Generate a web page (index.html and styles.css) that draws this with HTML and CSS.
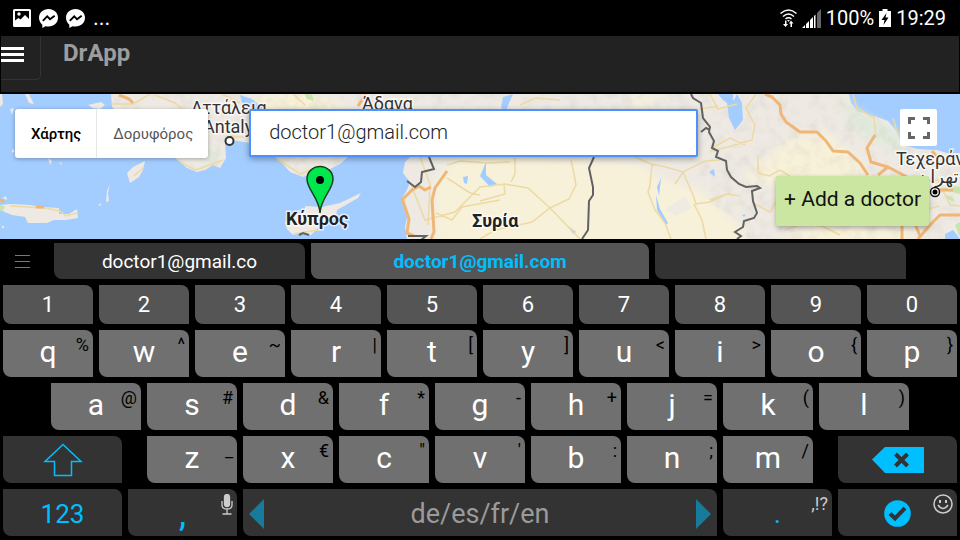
FILE: index.html
```html
<!DOCTYPE html>
<html lang="el">
<head>
<meta charset="utf-8">
<title>DrApp</title>
<link rel="stylesheet" href="styles.css">
</head>
<body>
<div class="statusbar">
  <div class="status-group notices">
    <svg width="18" height="18" viewBox="0 0 18 18"><path fill="#fff" fill-rule="evenodd" d="M1.500 0h15q1.500 0 1.500 1.500v15q0 1.500-1.500 1.500h-15Q0 18 0 16.500v-15Q0 0 1.500 0ZM2 2v9.500l3.500-2.500 2 1.500L12 6l4 4V2Z"/><circle cx="6" cy="5" r="1.700" fill="#fff"/></svg>
    <svg width="19" height="19" viewBox="0 0 20 20"><path fill="#fff" d="M10 0C4.300 0 0 4 0 9.300c0 3 1.300 5.300 3.500 7.200V20l3.300-1.900c1 .3 2.100.4 3.200.4 5.700 0 10-4 10-9.200S15.700 0 10 0Z"/><path fill="none" stroke="#000" stroke-width="2" d="M4 12.500 8.600 7.800l3 3L16.500 7"/></svg>
    <svg width="19" height="19" viewBox="0 0 20 20"><path fill="#fff" d="M10 0C4.300 0 0 4 0 9.300c0 3 1.300 5.300 3.500 7.200V20l3.300-1.900c1 .3 2.100.4 3.200.4 5.700 0 10-4 10-9.200S15.700 0 10 0Z"/><path fill="none" stroke="#000" stroke-width="2" d="M4 12.500 8.600 7.800l3 3L16.500 7"/></svg>
    <span class="more">...</span>
  </div>
  <div class="status-group">
    <svg width="17" height="19" viewBox="0 0 17 19" fill="none" stroke="#fff" stroke-width="1.500"><path d="M.5 4.500Q8.500-2.500 16.500 4.500M3 7.500q5.500-5 11 0M5.500 10q3-2.500 6 0"/><path fill="#fff" stroke="none" d="M7 11h3l-1.500 1.700ZM5 11.500h1.500V15H8l-2.500 3L3 15h2ZM11 11.500l2.500 3H12V18h-1.500v-3.500H9Z"/></svg>
    <svg width="19" height="19" viewBox="0 0 19 19" fill="#fff"><path d="M0 19l3-3v3ZM4 15l3-3v7H4ZM8 11l3-3v11H8ZM12 7l1.500-1.500V19H12Z"/><path fill="#666" d="M15 4l4-4v19h-4Z"/></svg>
    <span>100%</span>
    <svg width="12" height="18" viewBox="0 0 12 18"><path fill="#fff" d="M3.500 0h5v2H12v16H0V2h3.500Z"/><path d="M7.500 4 2.500 11h3L4.500 16l5-7.500h-3Z"/></svg>
    <span>19:29</span>
  </div>
</div>

<header class="appbar">
  <button class="menu" aria-label="Menu"><span></span><span></span><span></span></button>
  <h1>DrApp</h1>
</header>

<main class="map">
  <svg class="terrain" viewBox="0 94 960 145" preserveAspectRatio="xMidYMid slice">
    <defs>
      <filter id="soft"><feGaussianBlur stdDeviation="4"/></filter>
      <filter id="relief" x="0" y="0" width="100%" height="100%"><feTurbulence type="fractalNoise" baseFrequency=".09" numOctaves="3" seed="4"/><feColorMatrix values="0 0 0 0 .55  0 0 0 0 .52  0 0 0 0 .46  1.600 0 0 0 -.72"/></filter>
      <clipPath id="hills"><path d="M111 94H849L853 107 877 117 902 145 960 153V239H748L742 225 730 215 712 205 690 165 640 158 560 157 480 150 405 157 348 158 330 170 303 177 290 172 275 158 250 143H225L220 166 197 172 180 162 175 158 150 120 112 107Z"/></clipPath>
    </defs>
    <rect y="94" width="960" height="145" fill="#a3ccff"/>
    <g fill="#eeeae3">
      <path d="M111 94H849L851 103 857 111 877 117 888 121 897 132 902 145 918 149 937 150 950 154 960 153V239H407L405 227 408 213 402 198 407 190 410 182 403 173 405 162 411 156 348 157 340 164 330 169 318 172 303 177 290 172 282 163 275 157 262 146 250 143 237 141 225 143 226 158 220 168 213 165 205 170 197 172 187 168 180 162 175 158 165 145 150 135 128 120 112 107Z"/>
      <path d="M0 205 10 204 30 205 42 207 59 208 59 214 69 214 77 209 78 218 66 220 54 220 47 223 28 223 25 217 12 215 0 210Z"/>
      <path d="M145 161 143 170 139 177 130 183 127 173 133 167ZM110 184 108 193 109 201 106 202 107 191ZM48 158l4 3-2 4ZM59 162l3 1-1 2ZM98 205l4-2-2 3ZM2 198l4-2 1 4ZM25 94h4l5 10-5-1ZM88 105l13-3 4 3-5 4-7-1ZM0 94h2l1 10-3 3ZM10 109l4-1-2 7ZM12 149l3 2-3 2ZM2 226h2v2H2Z"/>
      <path d="M285 222 289 218 305 211V206L322 207 340 203 361 193 358 198 337 210 336 217 328 223 318 228 311 235 303 233 293 235 287 229Z"/>
    </g>
    <g fill="#f8f1d9" filter="url(#soft)">
      <path d="M436 182 455 160 500 154 560 160 640 164 655 178 700 190 722 212 742 228 745 250H436ZM740 180l50-40 35-8 45 42-25 20ZM770 245l50-20 90 5 5 20ZM255 94h60l50 25H260ZM630 94l35 5-30 6Z"/>
    </g>
    <path fill="#eeeae3" opacity=".8" d="M665 210l20-14 6 12-14 8ZM655 158h25l-2 10ZM706 183l28 22-17-4Z"/>
    <path fill="#dfeadb" filter="url(#soft)" d="M840 94l13 14 47 26 5 24-25-16-30-17ZM195 150l25-3-7 18Z"/>
    <g clip-path="url(#hills)"><rect y="94" width="960" height="145" filter="url(#relief)" opacity=".35"/></g>
    <g fill="#c8e6ac"><path d="M304 93l8 2 2 6-7-2ZM0 205l5 1-2 5-3-1ZM942 189l8-3 10 1v7l-8-2ZM945 195l7 2 3 5-8-3ZM955 225l5-3v15Z"/></g>
    <g fill="#a3ccff"><path d="M727 103l7-3 3-6 5 9 1 17-8 10-6-12ZM240 95l12 4 11 9-7 3-14-8ZM718 94h15v14l-10-8ZM480 176l6-14v13l11 9-7 3ZM503 97l10-3-7 16-5-2ZM463 177l5-1-1 8-3-1ZM709 172l5-3 1 8ZM657 187l4-9-2 18ZM656 195l4 14 8 14-2 2-9-15ZM945 234l8-4 7 9h-15ZM742 215l4-1-2 3ZM568 226l8 6-3 2Z"/></g>
    <g fill="none" stroke="#ecd9a4" stroke-width="1.500">
      <path d="M112 104 133 104 150 94M155 95 175 103 185 111M180 162 195 170 213 164 223 160M222 94 240 103M230 136 250 138M277 159 300 174 322 166M293 94 305 105M520 105 535 98 560 100M515 158v16l-4 8M420 157 430 184 428 225M447 165 460 161 487 163 510 162M410 182 425 220 455 212 480 187 505 184 528 188 550 208 580 239M480 201 505 194 504 184M436 213 452 220 462 207 500 200M571 160 574 174 576 185 569 199 550 208 532 222 495 230 480 239M447 178 470 193 480 195M635 157 651 164 666 167 683 172 705 161 720 160M652 164 650 185 648 192 655 210 665 223 671 239M683 172 693 195 696 204 710 202 727 194 740 196M683 172 675 184M694 204 702 220 706 239M710 94 718 109 737 104M712 148 730 138 745 145M700 109 718 106M756 94 746 108 755 125 752 140 728 147 710 151M758 155 758 173 769 176 780 170 790 176M710 200 730 193M753 203 770 212 776 202M853 94l4 14 17 10 2 20M893 118l5 17M785 230 803 224 822 226 840 235M918 182 938 180 950 205 960 206M923 210 940 206"/>
      <path d="M10 206 45 208 60 211 66 216 77 213M134 176 143 168M293 234 318 230 331 219"/>
    </g>
    <g fill="none" stroke="#f0b676" stroke-width="3" stroke-linejoin="round">
      <path d="M119 95 129 99 133 103M36 207h8M0 200l4 2"/>
      <path d="M366 94l-8 12M447 171 435 188 432 200 434 232 431 239M402 198 409 219 407 233 414 236M403 199 412 190 419 186 425 190 431 187"/>
      <path d="M765 94 772 97 780 105 781 114 786 122 800 132H817L826 141 833 151 848 152 860 163 868 175M875 135 867 148 871 162 888 167 878 175M888 167 907 177M960 215 940 215 931 224 918 239M902 226v13M916 226l4 10M932 151l5 6M939 190h14"/>
    </g>
    <g fill="none" stroke="#626262" stroke-width="2">
      <path d="M429 157 434 169 422 172 421 182 415 187 407 181M408 236h18l-5 4M299 235l4-2 6 2M594 157 589 168 593 187 593 195 589 201 588 230 582 239"/>
      <path d="M691 94 693 98 701 103 703 118 710 127 709 132 714 141 712 148 718 151 716 157 726 161 727 170 731 177 739 184 746 187 757 186 760 188 752 191 753 201 757 213 754 218 744 221 743 227 735 232 741 236 737 239M701 132 706 128 710 130"/>
    </g>
    <g class="place">
      <text x="191" y="114">Αττάλεια</text><text x="203" y="133">Antalya</text>
      <text x="362" y="110">Άδανα</text>
      <text x="896" y="165">Τεχεράν</text><text class="arabic" x="917" y="183">تهران</text>
      <text class="country" x="286" y="225">Κύπρος</text><text class="country" x="472" y="227">Συρία</text>
    </g>
    <circle cx="229.500" cy="141" r="4" fill="#fff" stroke="#333" stroke-width="2"/>
    <circle cx="935" cy="192" r="4.500" fill="#fff" stroke="#111" stroke-width="1.500"/><circle cx="935" cy="192" r="2.500"/>
    <path d="M320 213C319 197 307 190 307 179a13 12.500 0 0 1 26 0C333 190 321 197 320 213Z" fill="#00e64d" stroke="#173f20" stroke-width="1.500"/><circle cx="320" cy="180" r="4"/>
  </svg>
  <div class="controls">
    <div class="maptype"><button class="active">Χάρτης</button><button>Δορυφόρος</button></div>
    <input class="search" type="text" value="doctor1@gmail.com" aria-label="Search">
    <button class="fullscreen" aria-label="Fullscreen"><svg width="24" height="24" viewBox="0 0 24 24" fill="none" stroke="#666" stroke-width="3"><path d="M2.500 8V2.500H8M16 2.500h5.500V8M21.500 16v5.500H16M8 21.500H2.500V16"/></svg></button>
  </div>
  <button class="add">+ Add a doctor</button>
</main>

<section class="keyboard" aria-label="Keyboard">
  <div class="row suggestions">
    <button class="tools" aria-label="Options"><span></span><span></span><span></span></button>
    <button class="key dark">doctor1@gmail.co</button>
    <button class="key best">doctor1@gmail.com</button>
    <button class="key dark" aria-label="Empty suggestion"></button>
  </div>
  <div class="row numbers">
    <button class="key">1</button><button class="key">2</button><button class="key">3</button><button class="key">4</button><button class="key">5</button><button class="key">6</button><button class="key">7</button><button class="key">8</button><button class="key">9</button><button class="key">0</button>
  </div>
  <div class="row letters top">
    <button class="key">q<small>%</small></button><button class="key">w<small>^</small></button><button class="key">e<small>~</small></button><button class="key">r<small>|</small></button><button class="key">t<small>[</small></button><button class="key">y<small>]</small></button><button class="key">u<small>&lt;</small></button><button class="key">i<small>&gt;</small></button><button class="key">o<small>{</small></button><button class="key">p<small>}</small></button>
  </div>
  <div class="row letters home">
    <button class="key">a<small>@</small></button><button class="key">s<small>#</small></button><button class="key">d<small>&amp;</small></button><button class="key">f<small>*</small></button><button class="key">g<small>-</small></button><button class="key">h<small>+</small></button><button class="key">j<small>=</small></button><button class="key">k<small>(</small></button><button class="key">l<small>)</small></button>
  </div>
  <div class="row letters bottom">
    <button class="key dark shift" aria-label="Shift"><svg width="40" height="34" viewBox="0 0 40 34" fill="none" stroke="#00bfff" stroke-width="1.500"><path d="M20 1.500 2 18.500h9.500V32.500h17V18.500H38Z"/></svg></button>
    <button class="key first">z<small>_</small></button><button class="key">x<small>€</small></button><button class="key">c<small>"</small></button><button class="key">v<small>'</small></button><button class="key">b<small>:</small></button><button class="key">n<small>;</small></button><button class="key">m<small>/</small></button>
    <button class="key dark erase" aria-label="Backspace"><svg width="52" height="26" viewBox="0 0 52 26"><path fill="#00bfff" d="M0 12.500 13 0h39v26H13Z"/><path stroke="#333" stroke-width="4" d="M23.500 7l12 12M35.500 7l-12 12"/></svg></button>
  </div>
  <div class="row functions">
    <button class="key dark">123</button>
    <button class="key dark comma">,<svg class="corner" width="12" height="21" viewBox="0 0 12 21" fill="none" stroke="#ccc" stroke-width="1.300"><rect x="3.500" y=".5" width="5" height="12" rx="2.500" fill="#ccc"/><path d="M1 7v4q0 4 5 4t5-4V7M6 15v5M1.500 20h9"/></svg></button>
    <button class="key dark space"><svg width="15" height="30" viewBox="0 0 15 30"><path fill="#187b9b" d="M15 0v30L0 15Z"/></svg><span>de/es/fr/en</span><svg width="15" height="30" viewBox="0 0 15 30"><path fill="#187b9b" d="M0 0v30l15-15Z"/></svg></button>
    <button class="key dark">.<small>,!?</small></button>
    <button class="key dark" aria-label="Done"><svg width="27" height="27" viewBox="0 0 27 27"><circle cx="13.500" cy="13.500" r="13.300" fill="#00bfff"/><path fill="none" stroke="#333" stroke-width="4" d="M6 13.500l5 5L21 8"/></svg><svg class="corner" width="20" height="20" viewBox="0 0 20 20" fill="none" stroke="#ccc" stroke-width="1.500"><circle cx="10" cy="10" r="9"/><path d="M5 11q5 7 10 0"/><path fill="#ccc" stroke="none" d="M6 6h2v3H6ZM12 6h2v3h-2Z"/></svg></button>
  </div>
</section>
</body>
</html>
```
FILE: styles.css
```css
* { box-sizing: border-box; }
body {
  margin: 0;
  min-height: 100vh;
  display: flex;
  flex-direction: column;
  background: #000;
  color: #fff;
  font-family: Roboto, "Noto Sans", sans-serif;
}
button, input { margin: 0; padding: 0; border: 0; font: inherit; color: inherit; }
button { background: none; }
svg { display: block; flex: none; }

.statusbar {
  display: flex;
  justify-content: space-between;
  height: 36px;
  padding: 0 14px 0 13px;
  font-size: 20px;
  line-height: 38px;
}
.status-group { display: flex; align-items: center; gap: 5px; }
.notices { gap: 8px; }
.more { font-size: 22px; }

.appbar {
  display: flex;
  align-items: flex-start;
  gap: 22px;
  height: 58px;
  background: #222;
  border: solid #000;
  border-width: 0 1px 2px;
}
.appbar h1 { margin: 0; font-size: 24px; line-height: 34px; font-weight: 700; color: #9d9d9d; }
.menu {
  display: flex;
  flex-direction: column;
  gap: 3px;
  width: 40px;
  height: 44px;
  padding-top: 11px;
  border: solid #333;
  border-width: 0 1px 1px 0;
  border-bottom-right-radius: 5px;
}
.menu span { width: 23px; height: 3px; background: #fff; }

.map { position: relative; flex: 1; min-height: 145px; overflow: hidden; border-bottom: 1px solid #000; }
.terrain { position: absolute; inset: 0; width: 100%; height: 100%; }
.place text { font-size: 18px; fill: #333; stroke: #fff; stroke-width: 3px; stroke-opacity: .7; paint-order: stroke; }
.place .country { font-weight: 700; fill: #222; }
.place .arabic { font-family: "DejaVu Sans", sans-serif; }
.controls { position: relative; display: flex; align-items: flex-start; padding: 15px 23px 0 15px; }
.maptype {
  display: flex;
  height: 49px;
  border-radius: 3px;
  background: #fff;
  box-shadow: 0 1px 4px rgba(0, 0, 0, .3);
  font-size: 15px;
  color: #565656;
}
.maptype button { padding: 0 15px 0 16px; }
.maptype button + button { border-left: 1px solid #e6e6e6; }
.maptype .active { font-weight: 500; color: #000; }
.search {
  flex: 0 1 449px;
  min-width: 0;
  height: 48px;
  margin: 0 auto 0 41px;
  padding: 0 18px 2px;
  border: 2px solid #4d90fe;
  border-radius: 2px;
  background: #fff;
  box-shadow: 0 2px 6px rgba(0, 0, 0, .35);
  font-size: 20px;
  font-weight: 300;
  color: #222;
}
.fullscreen { display: grid; place-items: center; width: 37px; height: 37px; background: #fff; border-radius: 2px; }
.add {
  position: absolute;
  right: 31px;
  bottom: 13px;
  height: 50px;
  padding: 0 8px 4px;
  border-radius: 2px;
  background: #cae6a1;
  box-shadow: 0 2px 5px rgba(0, 0, 0, .3);
  font-size: 21px;
  color: #111;
}

.keyboard { display: flex; flex-direction: column; gap: 6px; padding: 3px 0 4px; }
.row { display: grid; height: 47px; }
.suggestions { grid-template-columns: 51fr 257fr 344fr 257fr 51fr; height: 36px; font-size: 19px; }
.numbers { grid-template-columns: repeat(10, 1fr); height: 39px; font-size: 22px; }
.top { grid-template-columns: repeat(10, 1fr); }
.home { grid-template-columns: 1fr repeat(9, 2fr) 1fr; }
.home .key:first-child { grid-column: 2; }
.bottom { grid-template-columns: 125fr 19fr repeat(7, 96fr) 19fr 125fr; }
.bottom .first { grid-column: 3; }
.bottom .erase { grid-column: 11; }
.functions { grid-template-columns: 125fr 115fr 480fr 115fr 125fr; font-size: 26px; }
.letters { font-size: 30px; }

.key {
  position: relative;
  display: flex;
  align-items: center;
  justify-content: center;
  min-width: 0;
  margin: 0 3px;
  border-radius: 0 8px 0 8px;
  background: #707070;
}
.letters .key { padding-bottom: 4px; }
.letters .dark { padding-bottom: 0; }
.numbers .key, .suggestions .best { background: #555; }
.suggestions .dark, .functions .dark, .letters .dark { background: #333; }
.suggestions .best { color: #00bfff; font-weight: 700; }
.key small { position: absolute; top: 5px; right: 4px; font-size: 18px; line-height: 20px; color: #000; }
.functions .key { padding-top: 2px; color: #00bfff; }
.functions small { color: #ccc; }
.functions .comma { font-size: 36px; }
.functions .space { justify-content: space-between; padding: 2px 6px 0; font-size: 27px; color: #9a9a9a; }
.corner { position: absolute; top: 5px; right: 4px; }
.tools { display: flex; flex-direction: column; align-items: center; justify-content: center; gap: 5px; padding-right: 6px; }
.tools span { width: 15px; height: 1px; background: #777; }
```
